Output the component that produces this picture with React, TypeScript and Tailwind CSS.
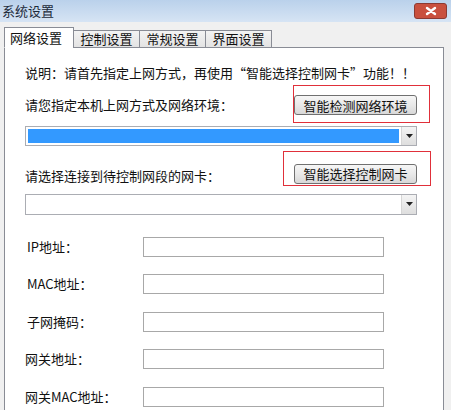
import { ReactNode } from "react";

const FONT = '"Noto Sans CJK SC", "Liberation Sans", sans-serif';

function RedMark({ className }: { className: string }) {
  // annotation box drawn over the dialog
  return <div className={`pointer-events-none absolute border border-[#e0303a] ${className}`} />;
}

function Button({ children }: { children: ReactNode }) {
  return (
    <button className="h-[20px] w-[123px] rounded-[3px] border border-[#707070] bg-[linear-gradient(#f6f6f6,#e9e9e9_50%,#d8d8d8)] text-[13px] leading-none text-[#111]">
      {children}
    </button>
  );
}

function Combo({ selected, h }: { selected?: boolean; h: string }) {
  return (
    <div className={`flex w-[392px] ${h} border border-[#abadb3] bg-white`}>
      <div className="flex-1 p-[2px]">
        {selected && <div className="h-full w-full bg-[#3399ff]" />}
      </div>
      <div className="flex w-[15px] items-center justify-center border-l border-[#d5d5d5] bg-[linear-gradient(#f4f4f4,#dedede)]">
        <svg width="7" height="4" viewBox="0 0 7 4">
          <path d="M0 0h7L3.5 4z" fill="#222" />
        </svg>
      </div>
    </div>
  );
}

function Field({ label, indent }: { label: string; indent?: boolean }) {
  return (
    <div className="flex h-[20px] items-center">
      <div className={`w-[118px] text-[13px] text-[#111] ${indent ? "pl-[2px]" : ""}`}>{label}</div>
      <div className="h-[20px] w-[241px] border border-[#a8a8a8] bg-white" />
    </div>
  );
}

const tabs = ["网络设置", "控制设置", "常规设置", "界面设置"];

export default function App() {
  return (
    <div className="h-[410px] w-[451px] overflow-hidden bg-[#f0f0f0]" style={{ fontFamily: FONT }}>
      {/* title bar */}
      <div className="flex h-[22px] items-center justify-between bg-[linear-gradient(#bad1eb,#d6e4f4)] pl-[2px] pr-[4px]">
        <span className="text-[13px] text-[#1c2a3a]">系统设置</span>
        <div className="flex h-[16px] w-[33px] items-center justify-center rounded-[3px] border border-[#8c3a32] bg-[#c9503e]">
          <svg width="12" height="10" viewBox="0 0 12 10">
            <path d="M2 2l8 6M10 2L2 8" stroke="#ffffff" strokeWidth="2.4" strokeLinecap="round" />
          </svg>
        </div>
      </div>

      {/* tabs */}
      <div className="relative z-10 -mb-px flex items-end pl-[4px] pt-[5px]">
        {tabs.map((t, i) =>
          i === 0 ? (
            <div key={t} className="flex h-[21px] w-[70px] items-center border border-b-white border-[#898c95] bg-white pl-[5px] text-[13px] text-[#111]">
              {t}
            </div>
          ) : (
            <div
              key={t}
              className="-ml-px flex h-[18px] w-[67px] items-center justify-center border border-[#898c95] bg-[linear-gradient(#f3f3f3,#e3e3e3)] text-[13px] text-[#111]"
            >
              {t}
            </div>
          )
        )}
      </div>

      {/* panel */}
      <div className="ml-[4px] h-[400px] w-[440px] border border-[#898c95] bg-white pl-[20px] pt-[17px]">
        <div className="text-[13px] leading-[16px] text-[#111]">说明：请首先指定上网方式，再使用“智能选择控制网卡”功能！！</div>

        <div className="relative mt-[14px] flex w-[392px] items-center justify-between">
          <span className="text-[13px] text-[#111]">请您指定本机上网方式及网络环境：</span>
          <Button>智能检测网络环境</Button>
          <RedMark className="left-[268px] top-[-10px] h-[38px] w-[137px]" />
        </div>

        <div className="mt-[11px]">
          <Combo selected h="h-[20px]" />
        </div>

        <div className="relative mt-[16px] flex w-[392px] items-center justify-between">
          <span className="pt-[4px] text-[13px] text-[#111]">请选择连接到待控制网段的网卡：</span>
          <Button>智能选择控制网卡</Button>
          <RedMark className="left-[258px] top-[-11px] h-[35px] w-[148px]" />
        </div>

        <div className="mt-[8px]">
          <Combo h="h-[21px]" />
        </div>

        <div className="mt-[22px] flex flex-col gap-[17.5px]">
          <Field label="IP地址：" indent />
          <Field label="MAC地址：" indent />
          <Field label="子网掩码：" indent />
          <Field label="网关地址：" />
          <Field label="网关MAC地址：" />
        </div>
      </div>
    </div>
  );
}
